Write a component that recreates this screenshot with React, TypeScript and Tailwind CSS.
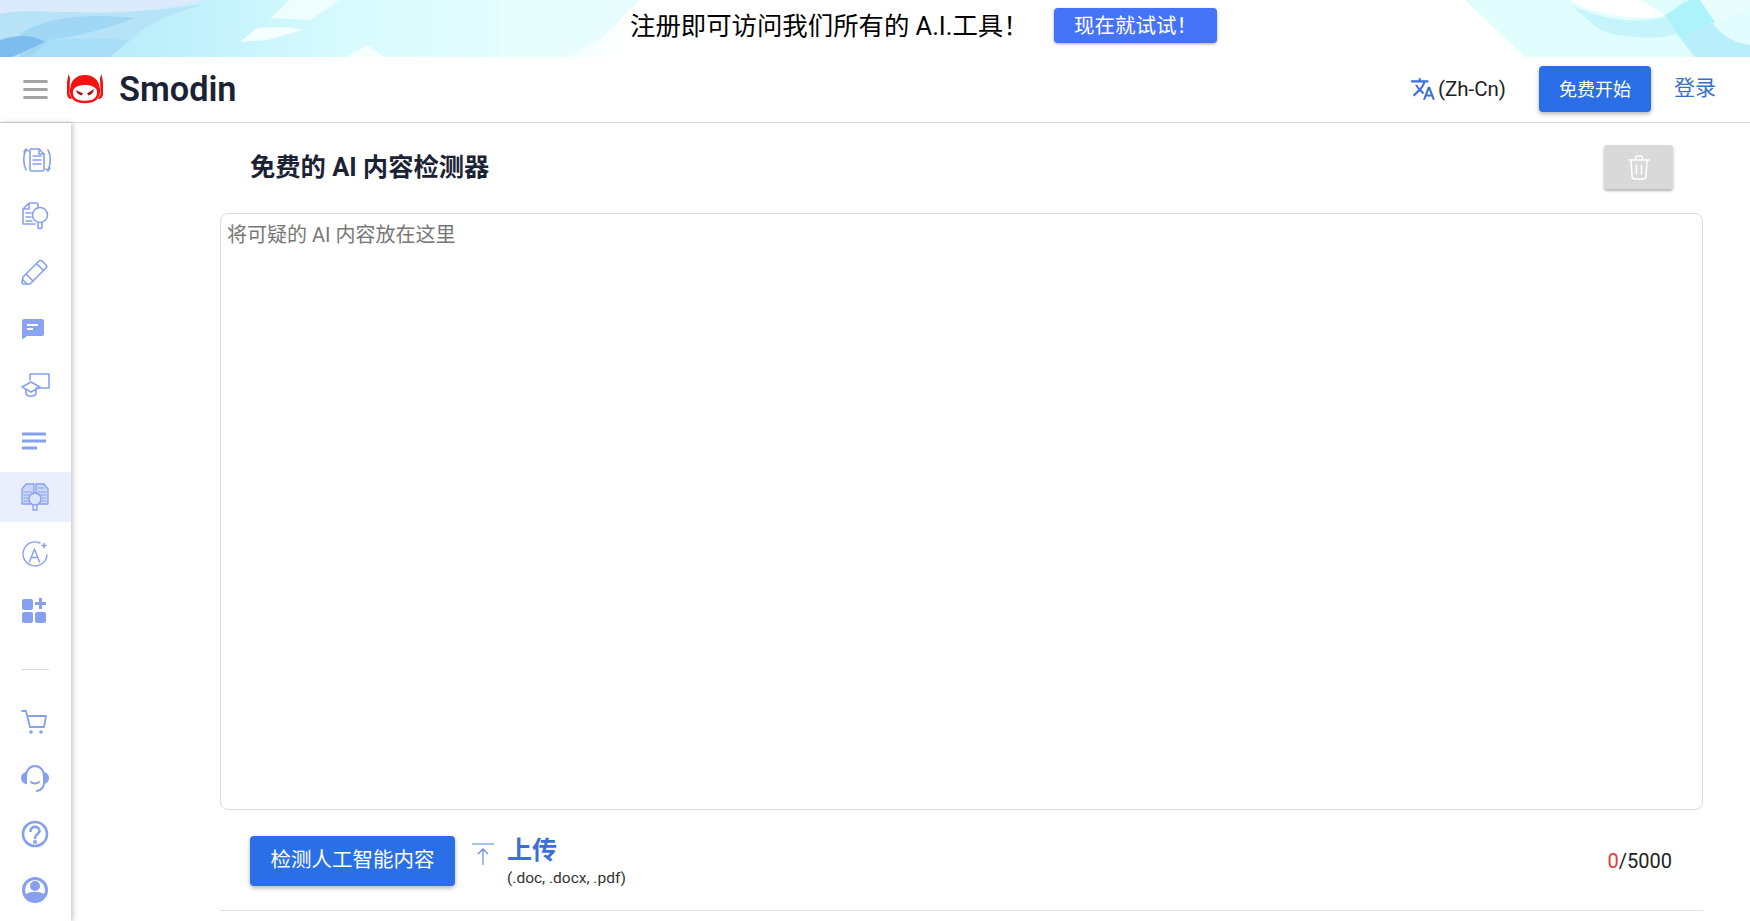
import { ReactNode } from "react";

const ICON = "#86a0ee";

function Svg({ children, className = "w-[32px] h-[32px]" }: { children: ReactNode; className?: string }) {
  return (
    <svg viewBox="0 0 32 32" fill="none" stroke={ICON} strokeWidth="1.6" strokeLinecap="round" strokeLinejoin="round" className={className}>
      {children}
    </svg>
  );
}

function BannerArt() {
  return (
    <svg viewBox="0 0 1750 57" preserveAspectRatio="none" className="absolute inset-0 w-full h-full">
      <defs>
        <linearGradient id="base" x1="0" x2="1" y1="0" y2="0">
          <stop offset="0" stopColor="#b5e6f8" />
          <stop offset="0.1" stopColor="#bff0fb" />
          <stop offset="0.2" stopColor="#d8fbfe" />
          <stop offset="0.3" stopColor="#e6fdfe" />
          <stop offset="0.36" stopColor="#ffffff" />
          <stop offset="1" stopColor="#ffffff" />
        </linearGradient>
      </defs>
      <rect width="1750" height="57" fill="url(#base)" />
      <path d="M500 0 H640 L600 40 L565 57 H500Z" fill="#e8fdfe" />
      <path d="M0 0 H205 C170 10 110 14 70 12 C40 12 20 10 0 14Z" fill="#dcebfb" />
      <path d="M0 14 C20 10 40 12 70 12 C110 14 150 12 205 4 C170 14 150 22 130 40 L110 57 H0Z" fill="#b7e3f8" />
      <path d="M20 34 C50 15 90 14 135 18 C110 28 80 36 50 40 L35 57 H20Z" fill="#9fd7f5" />
      <path d="M30 57 L50 40 C70 38 110 38 130 40 L110 57Z" fill="#a8dff7" />
      <path d="M0 57 V40 C20 33 35 36 45 42 L12 57Z" fill="#7cbcef" />
      <path d="M240 42 L257 28 C275 26 290 27 303 30 L267 40Z" fill="#f4ffff" />
      <path d="M345 57 L368 45 L385 57Z" fill="#f6ffff" />
      <path d="M270 18 L290 0 H340 L310 20Z" fill="#eefefe" />
      <path d="M1465 0 H1750 V57 H1525Z" fill="#e2fdfe" />
      <path d="M1570 0 C1590 15 1640 22 1665 15 L1640 0Z" fill="#ffffff" />
      <path d="M1570 5 C1590 20 1600 35 1620 35 C1670 45 1700 25 1710 20 L1685 0 L1668 16 C1640 25 1600 20 1570 5Z" fill="#c5f5fb" />
      <path d="M1665 15 L1690 0 H1700 L1715 22 L1680 38Z" fill="#adf3fb" />
      <path d="M1680 38 L1712 22 C1720 35 1735 43 1750 45 V57 H1695Z" fill="#b9effa" />
      <path d="M1715 22 C1725 19 1740 14 1750 8 V0 H1700Z" fill="#e9fdfe" />
    </svg>
  );
}

function Logo() {
  return (
    <svg viewBox="0 0 38 30" className="w-[38px] h-[30px]">
      <path d="M2.500 0 L4 4 L3.500 20 L6 25 C3 25 1 23 1 20 V8Z" fill="#f5130f" />
      <path d="M35.500 0 L34 4 L34.500 20 L32 25 C35 25 37 23 37 20 V8Z" fill="#f5130f" />
      <path d="M19 1 C28 1 33 7 33.500 13 C35 17 34 24 29 27 C23 30 14 30 9 27 C4 24 3 17 4.500 13 C5 7 10 1 19 1Z" fill="#f5130f" />
      <path d="M19 11 C25 11 30 13 31 17 C31.500 22 29 25 25 26 C21 27 16 27 13 26 C9 25 6.500 22 7 17 C8 13 13 11 19 11Z" fill="#fff" />
      <path d="M10 16 L17 19.500 L15.500 21.500 C13 21 10.500 19 10 16Z" fill="#a81212" />
      <path d="M28 15 L21 19.500 L22.500 21.500 C25 21 27.500 18.500 28 15Z" fill="#a81212" />
    </svg>
  );
}

const topIcons: { key: string; node: ReactNode; active?: boolean }[] = [
  {
    key: "rewrite",
    node: (
      <Svg className="w-[32px] h-[32px] ml-[4px]">
        <path d="M10 5 H18 L23 10 V25 C23 26 22 27 21 27 H11 C10 27 9 26 9 25 V6 C9 5.500 9.500 5 10 5Z" />
        <path d="M12 12 H20 M12 16 H20 M12 20 H20 M18 5 V10 H23" />
        <path d="M5 6 C2 11 2 20 5 26 M3 8 L5 5 L7 7" />
        <path d="M27 6 C30 11 30 20 27 26 M29 24 L27 27 L25 25" />
      </Svg>
    ),
  },
  {
    key: "plagiarism",
    node: (
      <Svg>
        <path d="M4 9 L10 3 H17 C18 3 19 4 19 5 V8 M10 3 V9 H4 V24 H16" />
        <path d="M7 13 H12 M7 17 H12 M7 21 H13" />
        <circle cx="21" cy="15" r="7.500" />
        <path d="M19 23 V27 C19 29 23 29 23 27 V23" />
      </Svg>
    ),
  },
  {
    key: "writer",
    node: (
      <Svg className="w-[32px] h-[32px] mr-[2px]">
        <path d="M5 21 L21 5 C22 4 23 4 24 5 L28 9 C29 10 29 11 28 12 L12 28 L6 28 C4.500 28 4 27 4 26Z" />
        <path d="M8 18 L15 25 M19 8 L25 14 M5 24 L9 28" />
      </Svg>
    ),
  },
  {
    key: "chat",
    node: (
      <svg viewBox="0 0 22 20" className="w-[22px] h-[20px] mr-[4px]">
        <path d="M2 0 H20 C21 0 22 1 22 2 V15 C22 16 21 17 20 17 H5 L1 20 C0.500 20 0 19.500 0 19 V2 C0 1 1 0 2 0Z" fill="#8aa3f5" />
        <path d="M5 6 H16 M5 10 H11" stroke="#fff" strokeWidth="1.800" />
      </svg>
    ),
  },
  {
    key: "grader",
    node: (
      <Svg className="w-[32px] h-[32px] mb-[4px]">
        <path d="M11 13 V7 H30 V21 H17" />
        <path d="M3 20 L12 15 L21 20 L12 25Z" />
        <path d="M7 23 V27 C9 30 15 30 17 27 V23" />
      </Svg>
    ),
  },
  {
    key: "summarize",
    node: (
      <svg viewBox="0 0 32 32" className="w-[32px] h-[32px] mr-[2px]" stroke={ICON} strokeWidth="3">
        <path d="M4 9 H28 M4 16 H28 M4 23 H19" />
      </svg>
    ),
  },
  {
    key: "detector",
    active: true,
    node: (
      <Svg>
        <path d="M3 8 L7 3 H15 V23 H3Z M17 3 H25 L29 8 V23 H17Z" strokeWidth="1.300" fill="#cbd7fa" />
        <path d="M5 11 H13 M5 14 H13 M5 17 H13 M5 20 H13 M19 7 H25 M19 11 H27 M19 14 H27 M19 17 H27 M19 20 H27" strokeWidth="1" />
        <circle cx="16" cy="18" r="6" fill="#dbe4fb" strokeWidth="1.300" />
        <path d="M14 24 V29 H18 V24" strokeWidth="1.300" />
      </Svg>
    ),
  },
  {
    key: "grammar",
    node: (
      <Svg className="w-[32px] h-[32px] mt-[2px]">
        <path d="M21 5 A12 12 0 1 0 28 17" strokeWidth="1.400" />
        <path d="M10.500 24 L15.500 11 L20.500 24 M12.500 19.500 H18.500" strokeWidth="1.400" />
        <path d="M23 7.500 H27 M25 5.500 V9.500" />
      </Svg>
    ),
  },
  {
    key: "apps",
    node: (
      <svg viewBox="0 0 32 32" className="w-[32px] h-[32px] mr-[2px]" fill={ICON}>
        <rect x="4" y="5" width="11" height="11" rx="2" />
        <rect x="4" y="18" width="11" height="11" rx="2" />
        <rect x="17" y="18" width="11" height="11" rx="2" />
        <path d="M22.500 4 V15 M17 9.500 H28" stroke={ICON} strokeWidth="3" />
      </svg>
    ),
  },
];

const bottomIcons: { key: string; node: ReactNode }[] = [
  {
    key: "cart",
    node: (
      <Svg>
        <path d="M3 5 H7 L11 21 H25 L27 10 H9" strokeWidth="1.800" />
        <circle cx="12" cy="26" r="1.800" fill={ICON} stroke="none" />
        <circle cx="22" cy="26" r="1.800" fill={ICON} stroke="none" />
      </Svg>
    ),
  },
  {
    key: "support",
    node: (
      <svg viewBox="0 0 32 32" className="w-[32px] h-[32px]" fill="none" stroke={ICON} strokeWidth="2" strokeLinecap="round">
        <path d="M7 15 C7 8 11 4 16 4 C21 4 25 8 25 15" />
        <path d="M25 21 C25 26 22 28 18 29" />
        <path d="M12 20 C14 22 18 22 20 20" />
        <path d="M7 11 C4 12 3 14 3 16 C3 18 4 20 7 21Z M25 11 C28 12 29 14 29 16 C29 18 28 20 25 21Z" fill={ICON} />
      </svg>
    ),
  },
  {
    key: "help",
    node: (
      <svg viewBox="0 0 32 32" className="w-[32px] h-[32px]" fill="none" stroke={ICON} strokeWidth="2.600" strokeLinecap="round">
        <circle cx="16" cy="16" r="12" />
        <path d="M11.500 13 C11.500 7.500 20.500 7.500 20.500 13 C20.500 16 16 16 16 20" />
        <circle cx="16" cy="24" r="0.800" />
      </svg>
    ),
  },
  {
    key: "account",
    node: (
      <svg viewBox="0 0 32 32" className="w-[32px] h-[32px]" fill={ICON}>
        <path fillRule="evenodd" d="M16 3 A13 13 0 1 0 16 29 A13 13 0 1 0 16 3Z M16 6 A10 10 0 0 1 26 16 A10 10 0 0 1 25 20 C20 17 12 17 7 20 A10 10 0 0 1 6 16 A10 10 0 0 1 16 6Z" />
        <circle cx="16" cy="12" r="5" />
      </svg>
    ),
  },
];

function Sidebar() {
  return (
    <aside className="w-[71px] shrink-0 bg-white shadow-[2px_0_5px_rgba(0,0,0,0.22)] z-10 flex flex-col pt-[12px]">
      {topIcons.map((item) => (
        <div key={item.key} className={`h-[50px] mb-[6.4px] flex items-center justify-center pr-[2px] ${item.active ? "bg-[#eaeffd]" : ""}`}>
          {item.node}
        </div>
      ))}
      <div className="mt-[28px] mb-[27px] mx-[22px] h-px bg-[#dddddd]" />
      {bottomIcons.map((item) => (
        <div key={item.key} className="h-[50px] mb-[6.2px] flex items-center justify-center pr-[2px]">
          {item.node}
        </div>
      ))}
    </aside>
  );
}

export default function App() {
  return (
    <div className="h-screen overflow-hidden bg-white text-[#1a1a1a] font-['Roboto','Noto_Sans_CJK_SC',sans-serif]">
      <div className="relative h-[57px] flex items-center overflow-hidden">
        <BannerArt />
        <div className="relative w-full flex items-center pl-[630px]">
          <span className="text-[25.400px] text-black w-[424px] mt-[-4px]">注册即可访问我们所有的 A.I.工具！</span>
          <button className="w-[163px] h-[35px] mt-[-6px] pt-[1px] rounded bg-[#4573f7] text-white text-[20.500px] shadow-[0_1px_3px_rgba(0,0,0,0.35)]">现在就试试！</button>
        </div>
      </div>

      <header className="h-[66px] border-b border-[#d8d8d8] flex items-center pl-[23px] pr-[34px] pb-[1px]">
        <div className="w-[25px] flex flex-col gap-[5px]">
          <span className="h-[3px] bg-[#a3a3a3] rounded-sm" />
          <span className="h-[3px] bg-[#a3a3a3] rounded-sm" />
          <span className="h-[3px] bg-[#a3a3a3] rounded-sm" />
        </div>
        <div className="ml-[18px]"><Logo /></div>
        <span className="ml-[15px] text-[34.300px] font-semibold text-[#1a2233] leading-none">Smodin</span>
        <div className="ml-auto flex items-center">
          <svg viewBox="0 0 24 24" className="w-[26px] h-[26px] mr-[2px]" fill="#3b6fdc">
            <path d="M12.870 15.070l-2.540-2.510.030-.030c1.740-1.940 2.980-4.170 3.710-6.530H17V4h-7V2H8v2H1v1.990h11.170C11.500 7.920 10.440 9.750 9 11.350 8.070 10.320 7.300 9.190 6.690 8h-2c.730 1.630 1.730 3.170 2.980 4.560l-5.090 5.020L4 19l5-5 3.110 3.110.760-2.040zM18.500 10h-2L12 22h2l1.120-3h4.750L21 22h2l-4.500-12zm-2.620 7l1.620-4.330L19.120 17h-3.240z" />
          </svg>
          <span className="text-[20.500px] text-[#222222]">(Zh-Cn)</span>
          <button className="ml-[33px] w-[112px] h-[46px] rounded-[4px] bg-[#2b6fe8] text-white text-[18px] shadow-[0_2px_4px_rgba(0,0,0,0.3)]">免费开始</button>
          <span className="ml-[23px] text-[21px] text-[#3b6fc4]">登录</span>
        </div>
      </header>

      <div className="flex h-[798px]">
        <Sidebar />
        <main className="flex-1 pl-[149px] pr-[47px]">
          <div className="h-[90px] flex items-center justify-between pl-[30px] pr-[30px] pb-[2px]">
            <h1 className="text-[25.300px] mt-[1px] font-bold text-[#1a2233]">免费的 AI 内容检测器</h1>
            <button className="w-[69px] h-[44px] rounded-[3px] bg-[#d9d9d9] shadow-[0_2px_3px_rgba(0,0,0,0.3)] flex items-center justify-center">
              <svg viewBox="0 0 22 25" className="w-[22px] h-[25px]" fill="none" stroke="#fff" strokeWidth="1.500" strokeLinecap="round" strokeLinejoin="round">
                <path d="M1 5 H21 M7.500 5 V3 C7.500 2 8.500 1 9.500 1 H12.500 C13.500 1 14.500 2 14.500 3 V5" />
                <path d="M3 5 L4 21 C4 23 5.500 24 7 24 H15 C16.500 24 18 23 18 21 L19 5" />
                <path d="M8.500 10 V19 M13.500 10 V19" />
              </svg>
            </button>
          </div>
          <textarea
            readOnly
            placeholder="将可疑的 AI 内容放在这里"
            className="block w-full h-[597px] resize-none rounded-[8px] border border-[#dcdcdc] px-[6px] pt-[9px] text-[20px] leading-[24px] placeholder:text-[#777777] outline-none"
          />
          <div className="h-[101px] border-b border-[#e3e3e3] flex items-center pl-[30px] pr-[31px] pt-[1px]">
            <button className="w-[205px] h-[50px] rounded-[4px] bg-[#2b6fe8] text-white text-[20.500px] shadow-[0_2px_4px_rgba(0,0,0,0.3)]">检测人工智能内容</button>
            <svg viewBox="0 0 24 24" className="ml-[16px] w-[24px] h-[24px] mt-[-14px]" fill="none" stroke="#5585dc" strokeWidth="1.100">
              <path d="M1 2 H23 M12 23 V7 M7 12 L12 7 L17 12" />
            </svg>
            <div className="ml-[12px] mt-[2px] flex flex-col">
              <span className="text-[25px] leading-[28px] font-bold text-[#3b6fd8]">上传</span>
              <span className="text-[15.500px] leading-[18px] mt-[4px] text-[#333333]">(.doc, .docx, .pdf)</span>
            </div>
            <div className="ml-auto text-[20px] text-[#222222]"><span className="text-[#e03a3a]">0</span>/5000</div>
          </div>
        </main>
      </div>
    </div>
  );
}
